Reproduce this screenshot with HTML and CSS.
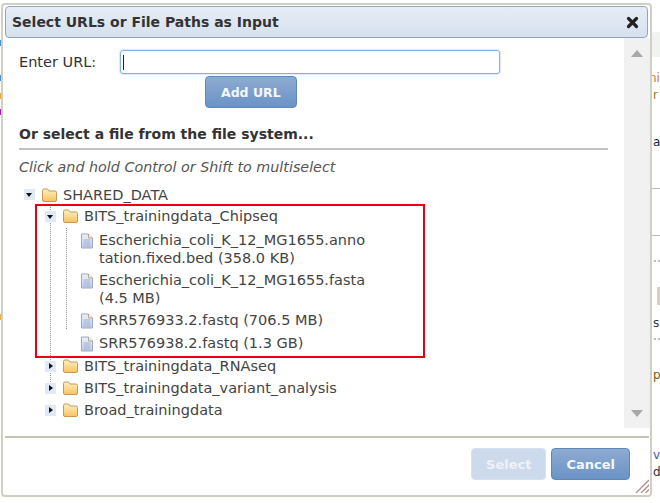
FILE: index.html
```html
<!DOCTYPE html>
<html lang="en">
<head>
  <meta charset="UTF-8">
  <title>Select URLs or File Paths as Input</title>
  <link rel="stylesheet" href="styles.css">
</head>
<body>

<svg width="0" height="0" class="defs">
  <defs>
    <linearGradient id="folderFill" x1="0" y1="0" x2="0" y2="1">
      <stop offset="0" stop-color="#fff0c4"/>
      <stop offset="1" stop-color="#f6c35f"/>
    </linearGradient>
    <linearGradient id="fileFill" x1="0" y1="0" x2="0" y2="1">
      <stop offset="0" stop-color="#eef2fa"/>
      <stop offset="1" stop-color="#bfcde6"/>
    </linearGradient>
    <symbol id="folder" viewBox="0 0 17 16">
      <path d="M1.500 3.500Q1.500 2 3 2H6.500L8 4H14Q15.500 4 15.500 5.500V13Q15.500 14.500 14 14.500H3Q1.500 14.500 1.500 13Z" fill="url(#folderFill)" stroke="#c49a55"/>
    </symbol>
    <symbol id="file" viewBox="0 0 14 16">
      <path d="M1.500 1H8.500L12.500 5V15H1.500Z" fill="url(#fileFill)" stroke="#9aa8c4"/>
      <path d="M8.500 1V5H12.500" fill="#f4efe2" stroke="#b3a98c"/>
      <path d="M3.500 7H10.500M3.500 9H10.500M3.500 11H10.500M3.500 13H10.500" stroke="#9fb2d6"/>
    </symbol>
  </defs>
</svg>

<div class="backdrop">
  <div class="bg-bar"></div>
  <span class="frag f1">ni</span>
  <span class="frag f2">r</span>
  <span class="frag f3">a</span>
  <div class="bg-rule r1"></div>
  <div class="bg-rule r2"></div>
  <div class="bg-thumb"></div>
  <span class="frag f4">s</span>
  <span class="frag f5">p</span>
  <span class="frag f6">v</span>
  <span class="frag f7">d</span>
  <i class="speck s1"></i>
  <i class="speck s2"></i>
  <i class="speck s3"></i>
  <i class="speck s4"></i>
  <i class="blip b1"></i>
  <i class="blip b2"></i>
  <i class="blip b3"></i>
  <i class="blip b4"></i>
  <i class="blip b5"></i>
</div>

<div class="dialog">
  <div class="titlebar">
    <span class="title">Select URLs or File Paths as Input</span>
    <svg class="close" width="13" height="13" viewBox="0 0 13 13"><path d="M2.500 2.500L10.500 10.500M10.500 2.500L2.500 10.500" stroke="#222" stroke-width="3.200" stroke-linecap="round"/></svg>
  </div>

  <div class="middle">
    <div class="content">
      <div class="url-row">
        <label class="url-label">Enter URL:</label>
        <div class="url-input"><span class="caret"></span></div>
      </div>
      <div class="add-row"><button class="btn add">Add URL</button></div>

      <h2 class="section">Or select a file from the file system...</h2>
      <p class="hint">Click and hold Control or Shift to multiselect</p>

      <div class="tree">
        <div class="node root">
          <span class="toggle open"></span>
          <svg class="ico-folder"><use href="#folder"/></svg>
          <span class="name">SHARED_DATA</span>
        </div>
        <div class="branch">
          <div class="node">
            <span class="toggle open"></span>
            <svg class="ico-folder"><use href="#folder"/></svg>
            <span class="name">BITS_trainingdata_Chipseq</span>
          </div>
          <div class="files">
            <div class="file">
              <svg class="ico-file"><use href="#file"/></svg>
              <span class="name">Escherichia_coli_K_12_MG1655.anno<br>tation.fixed.bed (358.0 KB)</span>
            </div>
            <div class="file">
              <svg class="ico-file"><use href="#file"/></svg>
              <span class="name">Escherichia_coli_K_12_MG1655.fasta<br>(4.5 MB)</span>
            </div>
            <div class="file">
              <svg class="ico-file"><use href="#file"/></svg>
              <span class="name">SRR576933.2.fastq (706.5 MB)</span>
            </div>
            <div class="file">
              <svg class="ico-file"><use href="#file"/></svg>
              <span class="name">SRR576938.2.fastq (1.3 GB)</span>
            </div>
          </div>
          <div class="node">
            <span class="toggle closed"></span>
            <svg class="ico-folder"><use href="#folder"/></svg>
            <span class="name">BITS_trainingdata_RNAseq</span>
          </div>
          <div class="node">
            <span class="toggle closed"></span>
            <svg class="ico-folder"><use href="#folder"/></svg>
            <span class="name">BITS_trainingdata_variant_analysis</span>
          </div>
          <div class="node">
            <span class="toggle closed"></span>
            <svg class="ico-folder"><use href="#folder"/></svg>
            <span class="name">Broad_trainingdata</span>
          </div>
        </div>
      </div>
    </div>

    <div class="scrollbar">
      <span class="arrow up"></span>
      <span class="arrow down"></span>
    </div>
  </div>

  <div class="footer">
    <button class="btn off">Select</button>
    <button class="btn">Cancel</button>
  </div>

  <svg class="grip" width="14" height="14" viewBox="0 0 14 14"><path d="M1 14L14 1M6 14L14 6M10.500 14L14 10.500" stroke="#b78a8a" stroke-width="1.300"/></svg>
  <div class="highlight"></div>
</div>

</body>
</html>
```

FILE: styles.css
```css
html, body {
  margin: 0;
  height: 100%;
  background: #fff;
  overflow: hidden;
}
body {
  position: relative;
  font-family: "DejaVu Sans", sans-serif;
  font-size: 12px;
  color: #333;
}
.defs {
  position: absolute;
}

/* page behind the dialog */
.backdrop {
  position: absolute;
  inset: 0;
}
.bg-bar {
  position: absolute;
  left: 652px;
  right: 0;
  top: 32px;
  height: 25px;
  background: #f1f3f1;
}
.bg-rule {
  position: absolute;
  left: 652px;
  right: 0;
  height: 1px;
  background: #bbb;
}
.r1 { top: 188px; }
.r2 { top: 235px; }
.bg-thumb {
  position: absolute;
  left: 657px;
  top: 287px;
  width: 3px;
  height: 18px;
  background: #d8cfc4;
}
.frag {
  position: absolute;
  left: 653px;
  font-size: 12px;
  line-height: 14px;
  color: #333;
}
.f1 { left: 649px; top: 71px; color: #c8743a; }
.f2 { top: 88px; color: #a87a1e; }
.f3 { top: 135px; color: #223; }
.f4 { top: 316px; }
.f5 { top: 368px; color: #7a5a10; }
.f6 { top: 448px; color: #3a5aa0; }
.f7 { top: 465px; }
.speck {
  position: absolute;
  width: 2px;
  height: 2px;
  background: #bbb;
}
.s1 { left: 654px; top: 260px; }
.s2 { left: 658px; top: 260px; }
.s3 { left: 654px; top: 338px; }
.s4 { left: 658px; top: 338px; }
.blip {
  position: absolute;
  left: 0;
  width: 1px;
  height: 6px;
}
.b1 { top: 40px; background: #4a90d0; }
.b2 { top: 75px; background: #4a90d0; }
.b3 { top: 93px; background: #f0a030; }
.b4 { top: 109px; background: #a020a0; }
.b5 { top: 314px; background: #e8b040; }

/* dialog window */
.dialog {
  position: absolute;
  left: 1px;
  top: 3px;
  width: 647px;
  height: 490px;
  background: #fff;
  border: 2px solid #cfcfc3;
  border-radius: 4px;
  display: flex;
  flex-direction: column;
}
.titlebar {
  display: flex;
  align-items: center;
  justify-content: space-between;
  height: 32px;
  margin: 1px 2px 0;
  padding: 0 8px 0 6px;
  background: linear-gradient(#e6edf6, #d6e1ee);
  border: 1px solid #92a5bc;
  border-radius: 4px;
  box-sizing: border-box;
  flex: none;
}
.title {
  font-size: 14px;
  font-weight: bold;
  color: #333;
}
.middle {
  display: flex;
  height: 390px;
  flex: none;
}
.content {
  flex: 1;
  padding: 0 16px;
}
.scrollbar {
  width: 26px;
  background: #f1f1f1;
  display: flex;
  flex-direction: column;
  justify-content: space-between;
  align-items: center;
  padding: 12px 0 11px;
  box-sizing: border-box;
}
.arrow {
  width: 0;
  height: 0;
  border-left: 6px solid transparent;
  border-right: 6px solid transparent;
}
.up { border-bottom: 7px solid #a8a8a8; }
.down { border-top: 7px solid #a8a8a8; }

.url-row {
  display: flex;
  align-items: center;
  padding-top: 12px;
}
.url-label {
  width: 101px;
  font-size: 14.500px;
  color: #333;
}
.url-input {
  width: 380px;
  height: 24px;
  border: 1px solid #8ab0ea;
  box-shadow: 0 0 2px #8ab0ea;
  border-radius: 3px;
  box-sizing: border-box;
  display: flex;
  align-items: center;
  padding-left: 2px;
}
.caret {
  width: 1px;
  height: 15px;
  background: #222;
}
.add-row {
  padding: 2px 0 0 186px;
}
.btn {
  height: 32px;
  padding: 0 14px;
  font-family: inherit;
  font-size: 13px;
  font-weight: bold;
  color: #f4f7fb;
  background: linear-gradient(#8eabd2, #6a93c6);
  border: 1px solid #5f87b8;
  border-radius: 4px;
}
.btn.add {
  font-size: 12.500px;
  padding: 0 15px;
}
.btn.off {
  background: #cddaeb;
  border-color: #d6e0ee;
  color: #eef2f8;
}
.section {
  margin: 17px 0 0;
  padding-bottom: 5px;
  border-bottom: 2px solid #c0c0c0;
  font-size: 14px;
  font-weight: bold;
  line-height: 18px;
  color: #333;
}
.hint {
  margin: 9px 0 0;
  font-size: 14.300px;
  font-style: italic;
  line-height: 16px;
  color: #555;
}

/* file tree */
.tree {
  margin-top: 9px;
  font-size: 14.500px;
  color: #444;
}
.node {
  display: flex;
  align-items: center;
  height: 22px;
}
.node.root {
  height: 21px;
}
.toggle {
  width: 11px;
  height: 11px;
  margin: 0 6px 0 5px;
  background: #dfe9f7;
  position: relative;
  flex: none;
}
.toggle::after {
  content: "";
  position: absolute;
  width: 0;
  height: 0;
}
.toggle.open::after {
  left: 2px;
  top: 4px;
  border-left: 3.500px solid transparent;
  border-right: 3.500px solid transparent;
  border-top: 4px solid #111;
}
.toggle.closed::after {
  left: 4px;
  top: 2px;
  border-top: 3.500px solid transparent;
  border-bottom: 3.500px solid transparent;
  border-left: 4px solid #111;
}
.ico-folder {
  width: 17px;
  height: 16px;
  margin-right: 5px;
  flex: none;
}
.branch {
  margin-left: 21px;
  position: relative;
}
.branch::before {
  content: "";
  position: absolute;
  left: 10px;
  top: 2px;
  width: 1px;
  height: 188px;
  background: repeating-linear-gradient(#999 0 1px, transparent 1px 2px);
}
.files {
  margin-left: 26px;
  padding: 2px 0 1px 14px;
  position: relative;
}
.files::before {
  content: "";
  position: absolute;
  left: 0;
  top: 1px;
  width: 1px;
  height: 102px;
  background: repeating-linear-gradient(#999 0 1px, transparent 1px 2px);
}
.file {
  display: flex;
  align-items: flex-start;
  padding: 2px 0;
  line-height: 18px;
}
.file:last-child {
  margin-top: 1px;
}
.ico-file {
  width: 14px;
  height: 16px;
  margin: 2px 5px 0 0;
  flex: none;
}

.footer {
  flex: 1;
  margin: 8px 1px 0 2px;
  padding: 10px 19px 0 0;
  border-top: 2px solid #c4c4b4;
  display: flex;
  justify-content: flex-end;
  align-items: flex-start;
  gap: 5px;
}
.grip {
  position: absolute;
  right: 1px;
  bottom: 2px;
}
.highlight {
  position: absolute;
  left: 32px;
  top: 199px;
  width: 386px;
  height: 150px;
  border: 2px solid #e8000f;
}
```
